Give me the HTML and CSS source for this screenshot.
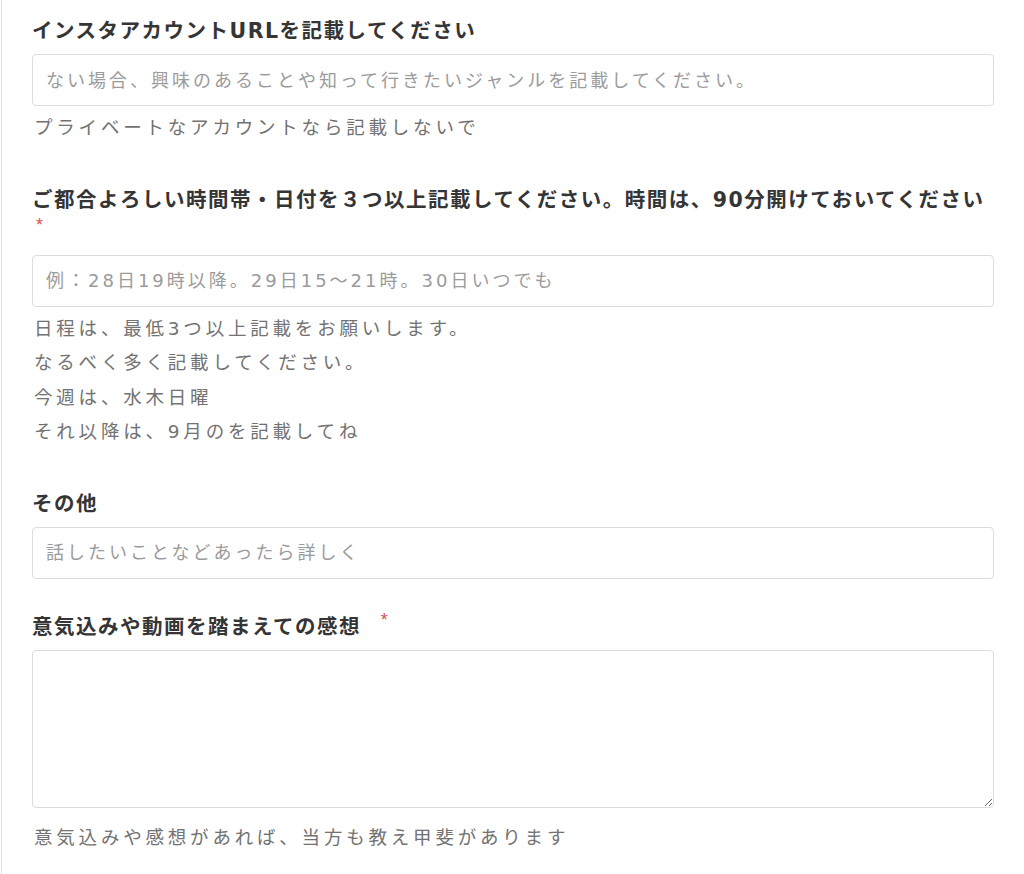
FILE: index.html
```html
<!DOCTYPE html>
<html lang="ja">
<head>
    <meta charset="UTF-8">
    <meta name="viewport" content="width=device-width, initial-scale=1.0">
    <title>お申し込みフォーム</title>
    <link rel="stylesheet" href="styles.css">
</head>
<body>
    <div class="form-page">
        <div class="field">
            <label class="field-label" for="insta-url">インスタアカウントURLを記載してください</label>
            <input type="text" id="insta-url" class="field-input" placeholder="ない場合、興味のあることや知って行きたいジャンルを記載してください。">
            <div class="field-help">プライベートなアカウントなら記載しないで</div>
        </div>

        <div class="field">
            <label class="field-label" for="schedule">ご都合よろしい時間帯・日付を３つ以上記載してください。時間は、90分開けておいてください <span class="required">*</span></label>
            <input type="text" id="schedule" class="field-input" placeholder="例：28日19時以降。29日15〜21時。30日いつでも">
            <div class="field-help">
                日程は、最低3つ以上記載をお願いします。<br>
                なるべく多く記載してください。<br>
                今週は、水木日曜<br>
                それ以降は、9月のを記載してね
            </div>
        </div>

        <div class="field">
            <label class="field-label" for="other">その他</label>
            <input type="text" id="other" class="field-input" placeholder="話したいことなどあったら詳しく">
        </div>

        <div class="field">
            <label class="field-label" for="impression">意気込みや動画を踏まえての感想 <span class="required">*</span></label>
            <textarea id="impression" class="field-textarea"></textarea>
            <div class="field-help help-after-textarea">意気込みや感想があれば、当方も教え甲斐があります</div>
        </div>
    </div>
</body>
</html>
```

FILE: styles.css
```css
body {
    margin: 0;
    background-color: #fff;
    font-family: "DejaVu Sans", "Noto Sans CJK JP", sans-serif;
    color: #333;
}
.form-page {
    margin-left: 1px;
    border-left: 1px solid #e2e2e2;
    padding: 15px 30px 20px 30px;
    min-height: 874px;
    box-sizing: border-box;
}
.field {
    margin-bottom: 32px;
}
.field-label {
    display: block;
    font-size: 20.5px;
    font-weight: bold;
    line-height: 32px;
    letter-spacing: 1.5px;
    word-spacing: 7px;
    color: #353535;
    margin-bottom: 7px;
}
.required {
    font-family: "Liberation Sans", sans-serif;
    font-size: 18px;
    font-weight: normal;
    line-height: 18px;
    vertical-align: top;
    color: #d9534f;
    margin-left: 4px;
}
.field-input,
.field-textarea {
    display: block;
    width: 100%;
    box-sizing: border-box;
    border: 1px solid #dcdcdc;
    border-radius: 4px;
    background-color: #fff;
    font-family: "DejaVu Sans", "Noto Sans CJK JP", sans-serif;
    font-size: 18px;
    letter-spacing: 3px;
    color: #333;
    outline: none;
}
.field-input {
    height: 52px;
    padding: 0 13px;
}
.field-textarea {
    height: 158px;
    padding: 10px 13px;
}
.field-input::placeholder {
    color: #9b9b9b;
}
.field-help {
    margin-top: 5px;
    padding-bottom: 6px;
    font-size: 18.5px;
    line-height: 34.5px;
    letter-spacing: 3.8px;
    color: #727272;
    padding-left: 2px;
}
.help-after-textarea {
    margin-top: 13px;
}
```
